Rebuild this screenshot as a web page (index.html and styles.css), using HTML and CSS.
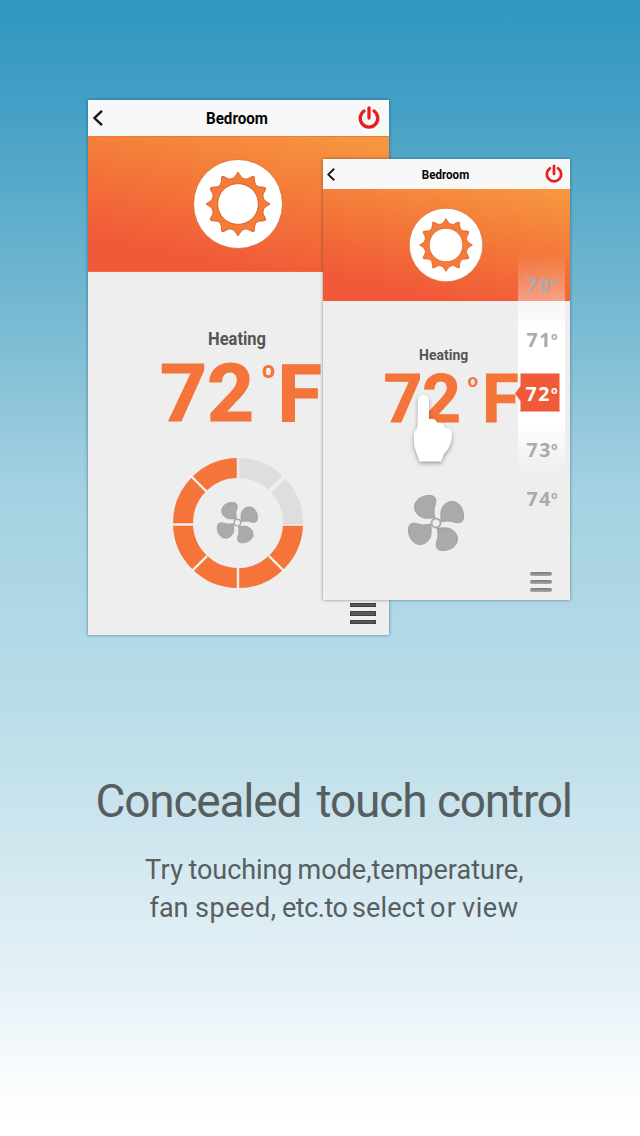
FILE: index.html
```
<!DOCTYPE html>
<html lang="en">
<head>
<meta charset="utf-8">
<title>Concealed touch control</title>
<link rel="stylesheet" href="styles.css">
</head>
<body>
<svg class="defs" width="0" height="0" aria-hidden="true">
  <defs>
    <symbol id="sun" viewBox="-46 -46 92 92">
      <circle r="44.5" fill="#fff" stroke="#d96a34" stroke-width=".8"/>
      <g fill="#f57b3a" stroke="#dd6028" stroke-width="1">
        <path d="M0-32 C2-29 3-26 7-25 C10-24 13-28 16-27.7 C17-24 16-20 19-18 C21-16 25-18 27.7-16 C28-13 24-11 25-7 C26-3 29-2 32 0 C29 2 26 3 25 7 C24 11 28 13 27.7 16 C25 18 21 16 19 18 C16 20 17 24 16 27.7 C13 28 10 24 7 25 C3 26 2 29 0 32 C-2 29-3 26-7 25 C-10 24-13 28-16 27.7 C-17 24-16 20-19 18 C-21 16-25 18-27.7 16 C-28 13-24 11-25 7 C-26 3-29 2-32 0 C-29-2-26-3-25-7 C-24-11-28-13-27.7-16 C-25-18-21-16-19-18 C-16-20-17-24-16-27.7 C-13-28-10-24-7-25 C-3-26-2-29 0-32Z"/>
        <circle r="20.4" fill="#fff"/>
      </g>
    </symbol>
    <symbol id="fan" viewBox="-22 -22 44 44">
      <g fill="#aaa" stroke="#999" stroke-width=".6">
        <path id="blade" d="M-1-3.5 C-3-4-7-3-10-4 C-15-6-17-11-15-15 C-13-19-7-21-3-20 C1-19 0-15-1-12 C-2-9-1-6-1-3.5Z"/>
        <use href="#blade" transform="rotate(90)"/>
        <use href="#blade" transform="rotate(180)"/>
        <use href="#blade" transform="rotate(270)"/>
        <circle r="4" stroke="none"/>
      </g>
      <circle r="2.6" fill="#eee"/>
    </symbol>
    <symbol id="power" viewBox="0 0 22 24">
      <path d="M6 5 A8.8 8.8 0 1 0 16 5 M11 2V12" fill="none" stroke="#e6201f" stroke-width="3.3" stroke-linecap="round"/>
    </symbol>
    <symbol id="back" viewBox="0 0 10 16">
      <path d="M9 .8 L1.5 8 L9 15.2" fill="none" stroke="#151515" stroke-width="2.3"/>
    </symbol>
  </defs>
</svg>
<main class="stage">
  <section class="phones">
    <article class="phone phone-back">
      <header class="bar">
        <svg class="back"><use href="#back"/></svg>
        <svg class="title" viewBox="0 0 64 20"><text x="1" y="15.500" textLength="62" lengthAdjust="spacingAndGlyphs">Bedroom</text></svg>
        <svg class="power"><use href="#power"/></svg>
      </header>
      <div class="hero"><svg class="sun"><use href="#sun"/></svg></div>
      <svg class="reading" viewBox="0 0 301 110">
        <text class="mode" x="120" y="23" textLength="58" lengthAdjust="spacingAndGlyphs">Heating</text>
        <text class="temp" x="72" y="98.500" textLength="94" lengthAdjust="spacingAndGlyphs">72</text>
        <text class="degree" x="174" y="56">o</text>
        <text class="temp" x="189.500" y="98.500">F</text>
      </svg>
      <div class="dial">
        <svg viewBox="-65 -65 130 130" width="130" height="130">
          <path d="M55 0 A55 55 0 1 1 0-55" fill="none" stroke="#f4743a" stroke-width="20"/>
          <path d="M0-55 A55 55 0 0 1 55 0" fill="none" stroke="#dddee0" stroke-width="20"/>
          <g stroke="#eee" stroke-width="2.4">
            <path d="M0-66V-44M0 44V66M-66 1.5H-44M44 1.5H66"/>
            <path d="M30-30L48-48" stroke-width="4"/>
            <path d="M-31-31L-48-48M31 33L46 48M-31 33L-46 48" stroke="#f9f3ef"/>
          </g>
          <use href="#fan" x="-22.6" y="-22.4" width="44" height="44"/>
        </svg>
      </div>
      <div class="menu"><i></i><i></i><i></i></div>
    </article>

    <article class="phone phone-front">
      <header class="bar">
        <svg class="back"><use href="#back"/></svg>
        <svg class="title" viewBox="0 0 64 20"><text x="1" y="17" textLength="62" lengthAdjust="spacingAndGlyphs">Bedroom</text></svg>
        <svg class="power"><use href="#power"/></svg>
      </header>
      <div class="hero"><svg class="sun"><use href="#sun"/></svg></div>
      <svg class="reading" viewBox="0 0 301 110">
        <text class="mode" x="117" y="24" textLength="60" lengthAdjust="spacingAndGlyphs">Heating</text>
        <text class="temp" x="74" y="100" textLength="94" lengthAdjust="spacingAndGlyphs">72</text>
        <text class="degree" x="176" y="57">o</text>
        <text class="temp" x="194" y="100">F</text>
      </svg>
      <div class="fan-only"><svg viewBox="0 0 44 44" width="60" height="60"><use href="#fan" width="44" height="44"/></svg></div>
      <div class="menu"><i></i><i></i><i></i></div>
      <div class="glow"></div>
      <div class="picker">
        <svg viewBox="0 0 60 270" width="60" height="270">
          <path d="M0 140.500L5.500 133V120.500H44.500V158.500H5.500V148Z" fill="#f15a38" stroke="#f7a48f" stroke-width=".6"/>
          <g class="num">
            <text x="11.500" y="39" textLength="24">70</text><text class="ord" x="36" y="32">o</text>
            <text x="11.500" y="94" textLength="24">71</text><text class="ord" x="36" y="87">o</text>
            <g fill="#fff"><text x="10.500" y="148" textLength="24">72</text><text class="ord" x="36" y="141">o</text></g>
            <text x="11.500" y="204" textLength="24">73</text><text class="ord" x="36" y="197">o</text>
            <text x="11.500" y="253" textLength="24">74</text><text class="ord" x="36" y="246">o</text>
          </g>
        </svg>
      </div>
      <svg class="hand" viewBox="0 0 44 74">
        <path d="M7.500 67.500 C6 61 2 55 2 49 V40 Q2 37 4.500 35 L5.500 33 L6 7 C6 -1.500 17-1.500 17 7 V25 Q23 23.500 25.500 29 Q31 28 33.500 34 Q40 34 40 40 C40 49 37 55 32 60 L29 67.500Z" fill="#fff"/>
      </svg>
    </article>
  </section>

  <section class="caption">
    <svg class="headline" viewBox="0 0 640 60" width="640" height="60">
      <text y="47"><tspan x="95.500" textLength="207">Concealed</tspan> <tspan x="316.500" textLength="111">touch</tspan> <tspan x="437" textLength="136">control</tspan></text>
    </svg>
    <svg class="copy" viewBox="0 0 640 80" width="640" height="80">
      <text y="29"><tspan x="145" textLength="38">Try</tspan> <tspan x="188.500" textLength="104">touching</tspan> <tspan x="297.500" textLength="226">mode,temperature,</tspan></text>
      <text y="67"><tspan x="149.500" textLength="39">fan</tspan> <tspan x="195" textLength="81">speed,</tspan> <tspan x="282" textLength="66">etc.to</tspan> <tspan x="352" textLength="73">select</tspan> <tspan x="430" textLength="26">or</tspan> <tspan x="462" textLength="56">view</tspan></text>
    </svg>
  </section>
</main>
</body>
</html>
```
FILE: styles.css
```
* { box-sizing: border-box; }
body { margin: 0; font-family: Roboto, "Liberation Sans", sans-serif; }
svg { display: block; overflow: visible; flex: none; }
.defs { position: absolute; }
.stage {
  width: 640px; height: 1136px; overflow: hidden;
  display: flex; flex-direction: column;
  background: linear-gradient(#3097bf 0, #439fc5 100px, #5dadcb 210px, #7bbbd4 330px, #96cadc 435px, #a5d2e2 495px, #b2d9e7 640px, #c3e1ea 770px, #d7eaf2 885px, #e8f3f8 1000px, #f8fbfc 1070px, #fff 1120px);
}
.phones { position: relative; height: 669px; padding: 100px 0 0 88px; }
.phone {
  display: flex; flex-direction: column;
  background: #eee; box-shadow: 0 0 3px rgba(20, 55, 75, .6);
}
.phone-back { width: 301px; height: 535px; }
.phone-front { position: absolute; left: 323px; top: 159px; width: 247px; height: 441px; box-shadow: 0 0 3px rgba(20, 40, 50, .5); }

.bar { display: flex; align-items: center; justify-content: space-between; flex: none; height: 36px; padding: 0 9px 0 5px; background: #f8f8f8; }
.phone-front .bar { height: 30px; padding: 0 7px 0 4px; }
.back { width: 10px; height: 16px; }
.title { width: 64px; height: 20px; margin-left: 13px; }
.power { width: 22px; height: 24px; }
.title text { font-weight: 700; font-size: 16.500px; fill: #050505; }
.phone-front .back { width: 8px; height: 13px; }
.phone-front .title { width: 49px; height: 15.300px; margin-left: 11px; }
.phone-front .power { width: 18px; height: 20px; }

.hero {
  flex: none; display: flex; align-items: center; justify-content: center;
  height: 136px; padding-right: 1px; background: linear-gradient(12deg, #f15a38 18%, #f37639 55%, #f79640 96%);
}
.phone-back .hero { border-top: 1px solid #ef7a30; border-bottom: 1px solid #ee6a45; }
.phone-front .hero { height: 112px; padding-bottom: 1px; }
.sun { width: 92px; height: 92px; }
.phone-front .sun { width: 76px; height: 76px; }

.reading { width: 301px; height: 110px; margin-top: 50px; }
.phone-front .reading { width: 247px; height: 90.270px; margin-top: 39px; }
.mode { font-weight: 700; font-size: 18px; fill: #555; }
.temp { font-weight: 700; font-size: 80.500px; fill: #f4743a; stroke: #f4743a; stroke-width: 1.200px; }
.degree { font-weight: 700; font-size: 23px; fill: #f4743a; }

.dial { display: flex; justify-content: center; margin-top: 27px; padding-right: 1px; }
.phone-back .dial { margin-top: 26px; }
.fan-only { display: flex; justify-content: center; margin: 63px 22px 0 0; }
.menu { display: flex; flex-direction: column; gap: 4px; margin: auto 13px 11px auto; }
.menu i { width: 26px; height: 4.500px; background: #585858; border: 1px solid #414141; }
.phone-front .menu { gap: 4px; margin: auto 18px 8px auto; }
.phone-front .menu i { width: 22px; height: 4px; border: 0; border-radius: 2px; background: linear-gradient(#777, #aaa); box-shadow: 0 0 2px #fff; }

.glow {
  position: absolute; left: 195px; top: 94px; width: 47px; height: 220px;
  background: linear-gradient(rgba(255,255,255,0), rgba(255,255,255,.4) 22%, #fff 35%, #fff 77%, rgba(255,255,255,0));
}
.picker { position: absolute; left: 192px; top: 94px; }
.num { font: 700 19.500px "Noto Sans", sans-serif; fill: #aaa; }
.ord { font-size: 10.500px; }
.hand { position: absolute; left: 89px; top: 235px; width: 44px; height: 74px; filter: drop-shadow(0 2px 2px rgba(0, 0, 0, .35)); }

.caption { display: flex; flex-direction: column; padding-top: 101px; gap: 20px; }
.headline text { font-size: 46px; fill: #575e60; }
.copy text { font-size: 27px; fill: #575e60; }
```
